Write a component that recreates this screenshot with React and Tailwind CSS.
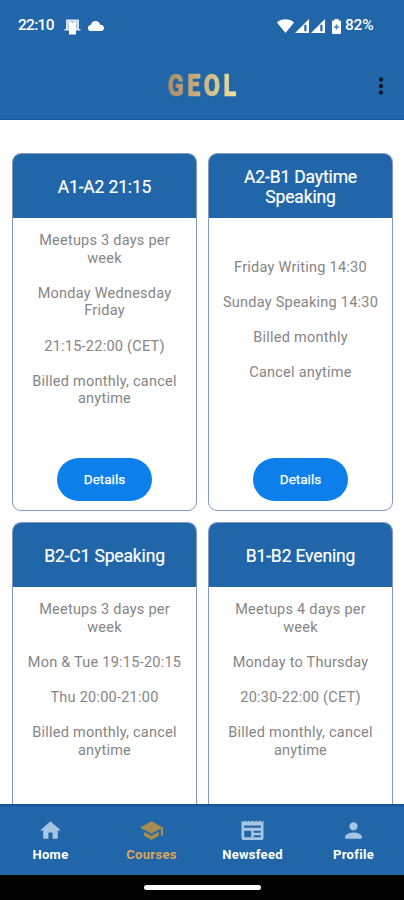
import React from 'react';
import { MdHome, MdSchool, MdPerson, MdMoreVert } from 'react-icons/md';

const courses = [
  {
    title: 'A1-A2 21:15',
    lines: ['Meetups 3 days per week', 'Monday Wednesday Friday', '21:15-22:00 (CET)', 'Billed monthly, cancel anytime'],
    hasDetails: true,
  },
  {
    title: 'A2-B1 Daytime Speaking',
    lines: ['Friday Writing 14:30', 'Sunday Speaking 14:30', 'Billed monthly', 'Cancel anytime'],
    hasDetails: true,
    short: true,
  },
  {
    title: 'B2-C1 Speaking',
    lines: ['Meetups 3 days per week', 'Mon & Tue 19:15-20:15', 'Thu 20:00-21:00', 'Billed monthly, cancel anytime'],
  },
  {
    title: 'B1-B2 Evening',
    lines: ['Meetups 4 days per week', 'Monday to Thursday', '20:30-22:00 (CET)', 'Billed monthly, cancel anytime'],
  },
];

const NewsIcon = ({ className }) => (
  <svg className={`h-[25px] w-[25px] ${className}`} viewBox="0 0 25 25" fill="currentColor">
    <path
      fillRule="evenodd"
      d="M1.500 2.500l1.800 1.500 1.800-1.500L7 4l1.800-1.500L10.700 4l1.800-1.500L14.300 4l1.900-1.500L18 4l1.900-1.500L21.700 4l1.800-1.500V20q0 2-2 2h-18q-2 0-2-2zM4.200 7.500v2.300h16.600V7.500zM4.200 12.800V19.300h7V12.800zM13.800 12.800v2h7v-2zM13.800 17.300v2h7v-2z"
    />
  </svg>
);

const tabs = [
  { label: 'Home', icon: MdHome },
  { label: 'Courses', icon: MdSchool, active: true },
  { label: 'Newsfeed', icon: NewsIcon },
  { label: 'Profile', icon: MdPerson },
];

const SignalIcon = () => (
  <svg className="w-[14px] h-[14px]" viewBox="0 0 14 14">
    <path d="M0 14 14 0v14z" fill="#fff" />
    <path d="M9.300 5.800h2.200V12.300H9.300z" fill="#2066a8" />
  </svg>
);

const StatusBar = () => (
  <div className="flex h-[52px] items-center justify-between pl-[18px] pr-[29px] text-white">
    <div className="flex items-center">
      <span className="w-[46px] text-[15.5px] font-medium leading-none tracking-[-0.7px]">22:10</span>
      {/* Notification icon */}
      <svg className="w-[17px] h-[17px]" viewBox="0 0 17 17">
        <path d="M2 1.500h13v9.500h1.500v1.500H.5V11H2z" fill="#fff" fillOpacity=".85" />
        <path d="M3.500 3h10v7h-10z" fill="#a9c2e6" />
        <path d="M4.500 3.500h2.200l1.800 1.700 1.800-1.700h2.200v3H12V16.500H5V6.500h-.5z" fill="#fff" />
      </svg>
      <svg className="ml-[7px] h-[10px] w-[16px]" viewBox="0 0 16 10">
        <path d="M3 10a3 3 0 0 1-.2-6C3.500 1.500 5.200 0 7.500 0c2.400 0 4.200 1.600 4.700 3.800C14.500 4 16 5.200 16 7c0 1.800-1.300 3-3.200 3z" fill="#fff" />
      </svg>
    </div>
    <div className="flex items-center">
      <svg className="w-[17px] h-[14px]" viewBox="0 0 17 14">
        <path d="M0 3.500C4.500-.7 12.500-.7 17 3.500L8.500 14z" fill="#fff" />
      </svg>
      <span className="ml-px flex gap-[2px]">
        <SignalIcon />
        <SignalIcon />
      </span>
      <svg className="ml-[7px] w-[9px] h-[15px]" viewBox="0 0 9 15">
        <path d="M2.500 0h4v1.500H8q1 0 1 1V14q0 1-1 1H1q-1 0-1-1V2.500q0-1 1-1h1.500z" fill="#fff" />
        <path d="M3.700 5.500h1.600v1.700H7v1.600H5.300v1.700H3.700V8.800H2V7.200h1.700z" fill="#4a80bb" />
      </svg>
      <span className="ml-[4px] w-[30px] whitespace-nowrap text-[15.500px] font-medium leading-none tracking-[-0.2px]">82%</span>
    </div>
  </div>
);

const CourseCard = ({ course }) => (
  <div className="flex h-[358px] flex-col overflow-hidden rounded-[9px] border border-[#8797c4] bg-white">
    <div className="flex h-[64px] shrink-0 items-center justify-center bg-[#2066a8] px-6 pt-[2px] text-center text-[17.500px] leading-[20.500px] tracking-[-0.150px] text-white [-webkit-text-stroke:0.2px_white]">
      {course.title}
    </div>
    <div className={`flex flex-col gap-[17.600px] px-[8px] text-center text-[14.500px] leading-[17.600px] tracking-[0.240px] text-[#858585] ${course.short ? 'pt-[40.500px]' : 'pt-[14px]'}`}>
      {course.lines.map((line) => (
        <p key={line} className={course.short ? 'whitespace-nowrap' : 'px-[5px]'}>{line}</p>
      ))}
    </div>
    {course.hasDetails && (
      <button className="mb-[9px] mt-auto h-[43px] w-[95px] shrink-0 self-center rounded-full bg-[#0c7feb] text-[13.500px] text-white [-webkit-text-stroke:0.25px_white]">
        Details
      </button>
    )}
  </div>
);

const App = () => {
  return (
    <div className="flex h-[900px] w-[404px] flex-col overflow-hidden bg-white font-['Roboto',sans-serif]">
      <header className="h-[120px] shrink-0 border-b border-[#15589d] bg-[#2066a8]">
        <StatusBar />
        <div className="grid h-[67px] grid-cols-[1fr_auto_1fr] items-center">
          <h1 className="col-start-2 scale-x-[0.76] bg-linear-to-r from-[#a88665] via-[#cdb384] to-[#f2e6a0] bg-clip-text pl-[5px] text-[31px] font-black leading-none tracking-[4.500px] text-transparent [-webkit-text-stroke:0.6px_transparent]">
            GEOL
          </h1>
          <MdMoreVert className="mr-[10px] justify-self-end text-[#0b1522]" size={26} />
        </div>
      </header>

      <main className="grid min-h-0 flex-1 grid-cols-2 content-start gap-x-[11px] gap-y-[11px] overflow-hidden pl-[12px] pr-[11px] pt-[33px]">
        {courses.map((course) => (
          <CourseCard key={course.title} course={course} />
        ))}
      </main>

      <nav className="grid h-[71px] shrink-0 grid-cols-4 border-t-2 border-[#15539b] bg-[#2066a8]">
        {tabs.map(({ label, icon: Icon, active }) => (
          <button key={label} className="flex flex-col items-center pt-[12px]">
            <Icon size={25} className={active ? 'text-[#a58c50]' : 'text-[#a5c5e2]'} />
            <span className={`mt-[3.500px] text-[13px] font-bold leading-[16px] tracking-[0.3px] ${active ? 'text-[#dda555]' : 'text-white'}`}>
              {label}
            </span>
          </button>
        ))}
      </nav>

      {/* Gesture bar */}
      <div className="flex h-[25px] shrink-0 items-center justify-center bg-black">
        <div className="h-[5px] w-[117px] rounded-full bg-white" />
      </div>
    </div>
  );
};

export default App;
